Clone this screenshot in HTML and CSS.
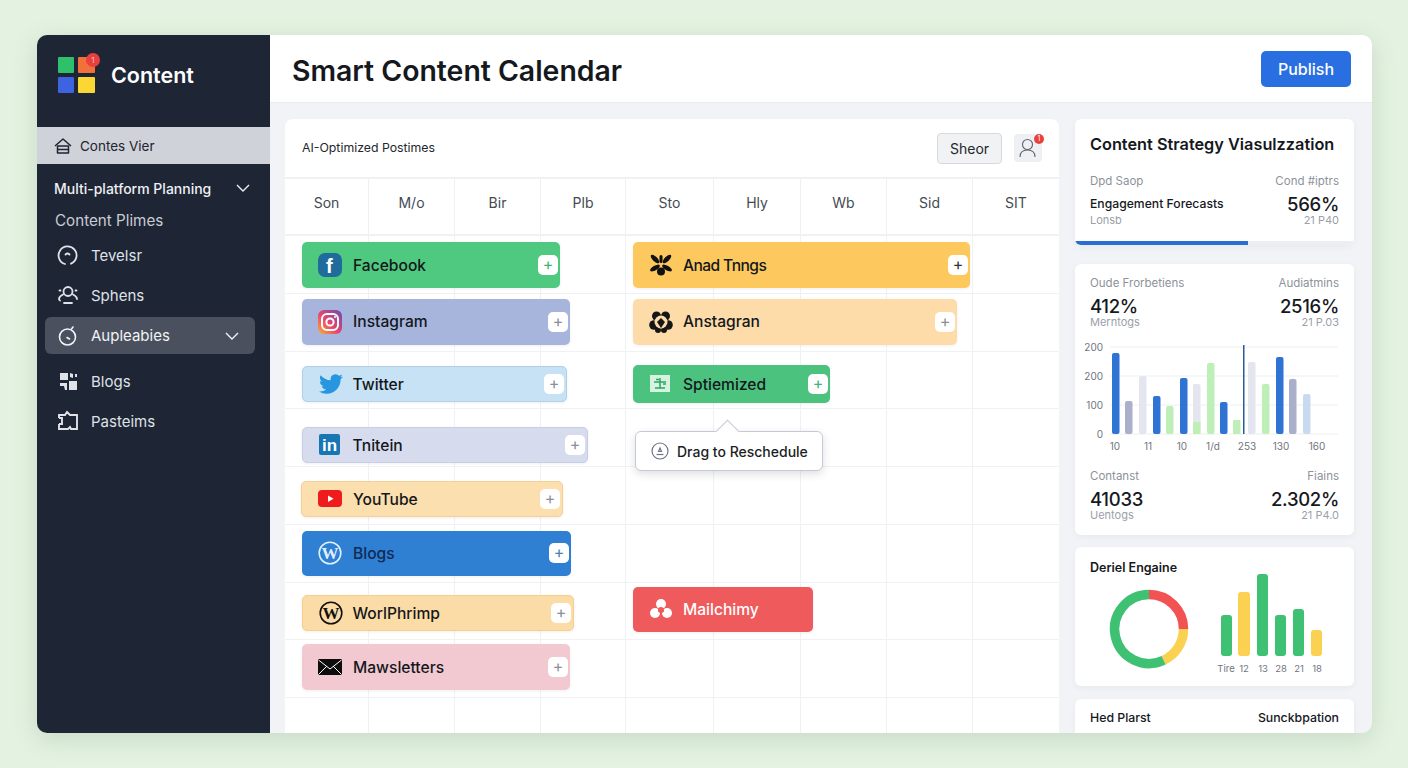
FILE: index.html

```html
<!DOCTYPE html>
<html>
<head>
  <meta charset="utf-8">
  <title>Smart Content Calendar</title>
  <link rel="stylesheet" href="styles.css">
</head>
<body>
  <div class="app">
    <aside class="sidebar">
      <div class="brand">
        <div class="logo">
          <span class="sq green"></span>
          <span class="sq orange"></span>
          <span class="sq blue"></span>
          <span class="sq yellow"></span>
          <span class="logo-badge">1</span>
        </div>
        <span class="brand-name">Content</span>
      </div>

      <div class="current">
        <svg class="current-icon" viewBox="0 0 18 18" fill="none" stroke="currentColor" stroke-width="1.5" stroke-linejoin="round"><path d="M1 9 9 2l8 7"/><path d="M3.500 9h11v7h-11z"/><path d="M3.500 12.500h11"/></svg>
        <span>Contes Vier</span>
      </div>

      <div class="group-head">
        <span>Multi-platform Planning</span>
        <svg class="chev" viewBox="0 0 14 8" fill="none" stroke="currentColor" stroke-width="1.4"><path d="M1 1l6 6 6-6"/></svg>
      </div>
      <div class="sub-head">Content Plimes</div>

      <div class="nav-item first">
        <svg class="nav-icon" viewBox="0 0 22 22" fill="none" stroke="currentColor" stroke-width="1.8" stroke-linecap="round"><path d="M8 20A9 9 0 1 1 14 19.700"/><path d="M8.500 10.500q2-2 4 0"/></svg>
        <span>Tevelsr</span>
      </div>
      <div class="nav-item">
        <svg class="nav-icon" viewBox="0 0 22 22" fill="none" stroke="currentColor" stroke-width="1.8" stroke-linecap="round"><circle cx="11" cy="7.500" r="4.500"/><path d="M6 10.500q-4 2-4 4.500 0 1 1 1.500"/><path d="M16 10.500q4 2 4 4.500"/><path d="M7 19h8"/><path d="M2.500 6.500h1M18.500 6.500h1"/></svg>
        <span>Sphens</span>
      </div>
      <div class="nav-item active">
        <svg class="nav-icon" viewBox="0 0 22 22" fill="none" stroke="currentColor" stroke-width="1.6" stroke-linecap="round"><circle cx="10.500" cy="12" r="8"/><path d="M10 12.500l2.500 1.500"/><path d="M14.500 4l1.500-2"/></svg>
        <span class="grow">Aupleabies</span>
        <svg class="chev" viewBox="0 0 14 8" fill="none" stroke="currentColor" stroke-width="1.4"><path d="M1 1l6 6 6-6"/></svg>
      </div>
      <div class="nav-item gap">
        <svg class="nav-icon" viewBox="0 0 22 22" fill="currentColor"><path d="M3 3h8v7H3z"/><path d="M13 3l3 1v4l-3-1z"/><path d="M18 4h2v3h-2z"/><path d="M12 11h8v9h-8z"/><path d="M3 13h7v7l-2 0-1-4H3z"/></svg>
        <span>Blogs</span>
      </div>
      <div class="nav-item">
        <svg class="nav-icon" viewBox="0 0 22 22" fill="none" stroke="currentColor" stroke-width="1.9"><path d="M2 8V5h6l2-3 3 3h7v14h-6l-1-2-2 2H2v-5"/><path d="M2 8h3v6H2"/></svg>
        <span>Pasteims</span>
      </div>
    </aside>

    <div class="content">
      <header class="topbar">
        <h1>Smart Content Calendar</h1>
        <button class="publish">Publish</button>
      </header>

      <div class="main">
        <section class="calendar">
          <div class="cal-head">
            <span class="cal-title">AI-Optimized Postimes</span>
            <div class="cal-tools">
              <button class="share">Sheor</button>
              <div class="avatar">
                <svg viewBox="0 0 28 28" fill="none" stroke="#5b6470" stroke-width="1.1"><circle cx="13.500" cy="10.500" r="5"/><path d="M6 23q0-7 7.500-7t7.500 7"/></svg>
                <span class="avatar-badge">1</span>
              </div>
            </div>
          </div>

          <div class="days">
            <div>Son</div><div>M/o</div><div>Bir</div><div>Plb</div><div>Sto</div><div>Hly</div><div>Wb</div><div>Sid</div><div>SIT</div>
          </div>

          <div class="cal-body">
            <div class="vline c1"></div><div class="vline c2"></div><div class="vline c3"></div>
            <div class="vline c4"></div><div class="vline c5"></div><div class="vline c6"></div>
            <div class="vline c7"></div><div class="vline c8"></div>
            <div class="hline r1"></div><div class="hline r2"></div><div class="hline r3"></div>
            <div class="hline r4"></div><div class="hline r5"></div><div class="hline r6"></div>
            <div class="hline r7"></div><div class="hline r8"></div>

            <div class="ev ev-facebook">
              <svg class="ev-icon" viewBox="0 0 24 24"><rect width="24" height="24" rx="7" fill="#1f6b9c"/><text x="8" y="20" class="fb-f">f</text></svg>
              <span class="ev-name">Facebook</span><span class="plus plus-green">+</span>
            </div>
            <div class="ev ev-instagram">
              <svg class="ev-icon" viewBox="0 0 24 24" fill="none">
                <defs><linearGradient id="ig" x1="0" y1="1" x2="1" y2="0"><stop offset="0" stop-color="#f9b233"/><stop offset=".45" stop-color="#e8456e"/><stop offset="1" stop-color="#6a4bb0"/></linearGradient></defs>
                <rect width="24" height="24" rx="6" fill="url(#ig)"/><rect x="4" y="4" width="16" height="16" rx="5" stroke="#fff" stroke-width="2"/><circle cx="12" cy="12" r="3.600" stroke="#fff" stroke-width="2"/><circle cx="17" cy="7" r="1" fill="#fff"/>
              </svg>
              <span class="ev-name">Instagram</span><span class="plus">+</span>
            </div>
            <div class="ev ev-twitter">
              <svg class="ev-icon" viewBox="0 0 24 24"><path fill="#2596df" d="M23.953 4.570a10 10 0 01-2.825.775 4.958 4.958 0 002.163-2.723c-.951.555-2.005.959-3.127 1.184a4.920 4.920 0 00-8.384 4.482C7.690 8.095 4.067 6.130 1.640 3.162a4.822 4.822 0 00-.666 2.475c0 1.710.870 3.213 2.188 4.096a4.904 4.904 0 01-2.228-.616v.060a4.923 4.923 0 003.946 4.827 4.996 4.996 0 01-2.212.085 4.936 4.936 0 004.604 3.417 9.867 9.867 0 01-6.102 2.105c-.390 0-.779-.023-1.170-.067a13.995 13.995 0 007.557 2.209c9.053 0 13.998-7.496 13.998-13.985 0-.210 0-.420-.015-.630A9.935 9.935 0 0024 4.590z"/></svg>
              <span class="ev-name">Twitter</span><span class="plus">+</span>
            </div>
            <div class="ev ev-linkedin">
              <svg class="ev-icon" viewBox="0 0 24 24"><rect y="1" width="21" height="21" rx="2" fill="#1876b4"/><text x="3" y="18" class="li-in">in</text></svg>
              <span class="ev-name">Tnitein</span><span class="plus">+</span>
            </div>
            <div class="ev ev-youtube">
              <svg class="ev-icon" viewBox="0 0 24 24"><rect y="3" width="24" height="17" rx="4" fill="#ee1c1c"/><path d="M10 8.500v6.500l5.500-3.200z" fill="#fff"/></svg>
              <span class="ev-name">YouTube</span><span class="plus">+</span>
            </div>
            <div class="ev ev-blogs">
              <svg class="ev-icon" viewBox="0 0 24 24"><circle cx="12" cy="12" r="10.800" fill="none" stroke="#dff0fb" stroke-width="1.600"/><text x="12" y="18" class="wp-w wp-light">W</text></svg>
              <span class="ev-name">Blogs</span><span class="plus plus-blue">+</span>
            </div>
            <div class="ev ev-wordpress">
              <svg class="ev-icon" viewBox="0 0 24 24"><circle cx="12" cy="12" r="10.800" fill="none" stroke="#111" stroke-width="1.600"/><text x="12" y="18" class="wp-w">W</text></svg>
              <span class="ev-name">WorlPhrimp</span><span class="plus">+</span>
            </div>
            <div class="ev ev-news">
              <svg class="ev-icon" viewBox="0 0 24 24"><rect y="4" width="24" height="16" rx="1" fill="#0d0d0d"/><path d="M.5 5 12 14 23.500 5M.5 19.500 9 11M23.500 19.500 15 11" fill="none" stroke="#fff" stroke-width="1"/></svg>
              <span class="ev-name">Mawsletters</span><span class="plus">+</span>
            </div>

            <div class="ev ev-anad">
              <svg class="ev-icon" viewBox="0 0 24 24" fill="#111"><ellipse cx="6" cy="6" rx="5.500" ry="2.300" transform="rotate(45 6 6)"/><ellipse cx="18" cy="6" rx="5.500" ry="2.300" transform="rotate(-45 18 6)"/><ellipse cx="6" cy="15" rx="5.500" ry="2.300" transform="rotate(-30 6 15)"/><ellipse cx="18" cy="15" rx="5.500" ry="2.300" transform="rotate(30 18 15)"/><rect x="10.500" y="2" width="3" height="8" rx="1.500"/><circle cx="12" cy="18.500" r="4"/></svg>
              <span class="ev-name">Anad Tnngs</span><span class="plus plus-dark">+</span>
            </div>
            <div class="ev ev-anstagran">
              <svg class="ev-icon" viewBox="0 0 24 24" fill="#161616"><circle cx="7.500" cy="6" r="4.500"/><circle cx="16.500" cy="6" r="4.500"/><circle cx="5" cy="15" r="4.800"/><circle cx="19" cy="15" r="4.800"/><circle cx="9" cy="20" r="3"/><circle cx="15" cy="20" r="3"/><circle cx="12" cy="12" r="6.500" fill="#fddcaa"/><path d="M12 8l4 4-4 6-4-6z"/></svg>
              <span class="ev-name">Anstagran</span><span class="plus">+</span>
            </div>
            <div class="ev ev-optimized">
              <svg class="ev-icon" viewBox="0 0 24 24"><rect x="1" y="3" width="20" height="17" fill="#d6f3e0"/><path d="M11 6v10M5 10h12M6 16h10M7 7.500h3M14 12h3" fill="none" stroke="#2fa565" stroke-width="1.500"/></svg>
              <span class="ev-name">Sptiemized</span><span class="plus plus-green">+</span>
            </div>
            <div class="ev ev-mailchimp">
              <svg class="ev-icon" viewBox="0 0 24 24" fill="#fff"><circle cx="12" cy="6" r="5"/><circle cx="6" cy="15" r="5"/><circle cx="18" cy="15" r="5"/><circle cx="12" cy="12" r="3" fill="#ef5b5c"/><path d="M12 9l3 5h-6z" fill="#ef5b5c"/></svg>
              <span class="ev-name">Mailchimy</span>
            </div>

            <div class="tooltip">
              <svg class="tip-icon" viewBox="0 0 18 18" fill="none" stroke="#6f7480" stroke-width="1.200"><circle cx="9" cy="9" r="8"/><path d="M7.500 9.500 9 6l1.500 3.500z"/><path d="M5.500 12.500h7"/></svg>
              <span>Drag to Reschedule</span>
            </div>
          </div>
        </section>

        <aside class="panel">
          <div class="card strategy">
            <h2>Content Strategy Viasulzzation</h2>
            <div class="stat-row">
              <div class="stat">
                <div class="s-label">Dpd Saop</div>
                <div class="s-name">Engagement Forecasts</div>
                <div class="s-sub">Lonsb</div>
              </div>
              <div class="stat right">
                <div class="s-label">Cond #iptrs</div>
                <div class="s-value">566%</div>
                <div class="s-sub">21 P40</div>
              </div>
            </div>
            <div class="progress"><div class="progress-fill"></div></div>
          </div>

          <div class="card forecast">
            <div class="stat-row">
              <div class="stat">
                <div class="s-label">Oude Frorbetiens</div>
                <div class="s-value">412%</div>
                <div class="s-sub">Merntogs</div>
              </div>
              <div class="stat right">
                <div class="s-label">Audiatmins</div>
                <div class="s-value">2516%</div>
                <div class="s-sub">21 P.03</div>
              </div>
            </div>

            <svg class="bars" viewBox="0 0 279 115">
              <g class="grid-lines">
                <path d="M35 7H263M35 36H263M35 65H263M35 94H263"/>
              </g>
              <g class="axis">
                <text x="28" y="10.500" text-anchor="end">200</text>
                <text x="28" y="39.500" text-anchor="end">200</text>
                <text x="28" y="68.500" text-anchor="end">100</text>
                <text x="28" y="97.500" text-anchor="end">0</text>
                <text x="40" y="110" text-anchor="middle">10</text>
                <text x="73" y="110" text-anchor="middle">11</text>
                <text x="107" y="110" text-anchor="middle">10</text>
                <text x="138" y="110" text-anchor="middle">1/d</text>
                <text x="172" y="110" text-anchor="middle">253</text>
                <text x="206" y="110" text-anchor="middle">130</text>
                <text x="242" y="110" text-anchor="middle">160</text>
              </g>
              <rect class="b-blue" x="37" y="13" width="7.500" height="81" rx="2"/>
              <rect class="b-slate" x="50" y="61" width="7.500" height="33" rx="2"/>
              <rect class="b-grey" x="64" y="36" width="7.500" height="58" rx="2"/>
              <rect class="b-blue" x="78" y="56" width="7.500" height="38" rx="2"/>
              <rect class="b-lime" x="91" y="66" width="7.500" height="28" rx="2"/>
              <rect class="b-blue" x="105" y="38" width="7.500" height="56" rx="2"/>
              <rect class="b-grey" x="118" y="44" width="7.500" height="50" rx="2"/>
              <rect class="b-lime" x="118" y="82" width="7.500" height="12"/>
              <rect class="b-lime" x="132" y="23" width="7.500" height="71" rx="2"/>
              <rect class="b-blue" x="145" y="62" width="7.500" height="32" rx="2"/>
              <rect class="b-lime" x="158" y="80" width="7.500" height="14" rx="1"/>
              <rect class="b-navy" x="168" y="5" width="1.500" height="89"/>
              <rect class="b-grey" x="173" y="22" width="7.500" height="72" rx="2"/>
              <rect class="b-lime" x="187" y="44" width="7.500" height="50" rx="2"/>
              <rect class="b-blue" x="201" y="17" width="7.500" height="77" rx="2"/>
              <rect class="b-slate" x="214" y="39" width="7.500" height="55" rx="2"/>
              <rect class="b-sky" x="228" y="54" width="7.500" height="40" rx="2"/>
            </svg>

            <div class="stat-row">
              <div class="stat">
                <div class="s-label">Contanst</div>
                <div class="s-value">41033</div>
                <div class="s-sub">Uentogs</div>
              </div>
              <div class="stat right">
                <div class="s-label">Fiains</div>
                <div class="s-value">2.302%</div>
                <div class="s-sub">21 P4.0</div>
              </div>
            </div>
          </div>

          <div class="card daily">
            <h3>Deriel Engaine</h3>
            <svg class="daily-chart" viewBox="0 0 279 116">
              <g fill="none" stroke-width="9.500">
                <path stroke="#f25252" d="M74 24.500A34.500 34.500 0 0 1 108.500 59"/>
                <path stroke="#fbd152" d="M108.500 59A34.500 34.500 0 0 1 88.600 90.300"/>
                <path stroke="#3ec173" d="M88.600 90.300A34.500 34.500 0 1 1 74 24.500"/>
              </g>
              <rect class="d-green" x="146" y="45" width="11" height="41" rx="3"/>
              <rect class="d-yellow" x="163" y="22" width="12" height="64" rx="3"/>
              <rect class="d-green" x="182" y="4" width="11" height="82" rx="3"/>
              <rect class="d-green" x="200" y="45" width="11" height="41" rx="3"/>
              <rect class="d-green" x="218" y="39" width="11" height="47" rx="3"/>
              <rect class="d-yellow" x="236" y="60" width="11" height="26" rx="3"/>
              <g class="axis small">
                <text x="151" y="102" text-anchor="middle">Tire</text>
                <text x="169" y="102" text-anchor="middle">12</text>
                <text x="188" y="102" text-anchor="middle">13</text>
                <text x="206" y="102" text-anchor="middle">28</text>
                <text x="224" y="102" text-anchor="middle">21</text>
                <text x="242" y="102" text-anchor="middle">18</text>
              </g>
            </svg>
          </div>

          <div class="card plans">
            <span>Hed Plarst</span>
            <span>Sunckbpation</span>
          </div>
        </aside>
      </div>
    </div>
  </div>
</body>
</html>
```

FILE: styles.css

```css
* {
  box-sizing: border-box;
}

body {
  margin: 0;
  height: 768px;
  overflow: hidden;
  padding: 35px 36px 35px 37px;
  background-color: #e4f3e1;
  font-family: Inter, "Liberation Sans", sans-serif;
  color: #15181d;
}

.app {
  display: flex;
  height: 698px;
  border-radius: 10px;
  overflow: hidden;
  background-color: #f1f3f6;
  box-shadow: 0 6px 24px rgba(70, 100, 80, 0.18);
}

/* sidebar */
.sidebar {
  width: 233px;
  flex-shrink: 0;
  background-color: #1e2535;
  color: #e6e8ec;
}

.brand {
  display: flex;
  align-items: center;
  height: 92px;
  padding: 0 0 12px 21px;
}

.logo {
  position: relative;
  display: grid;
  grid-template-columns: 16px 17px;
  grid-template-rows: 16px 16px;
  gap: 4px;
  margin-right: 16px;
}

.sq {
  border-radius: 1px;
}

.green { background-color: #2fc06c; }
.orange { background-color: #f2703a; }
.blue { background-color: #3d63e0; }
.yellow { background-color: #fad733; }

.logo-badge {
  position: absolute;
  top: -4px;
  right: -5px;
  width: 14px;
  height: 14px;
  border-radius: 50%;
  background-color: #ea3f3f;
  color: #f6c9c9;
  font-size: 8px;
  line-height: 14px;
  text-align: center;
}

.brand-name {
  font-size: 21.500px;
  font-weight: 600;
  color: #fff;
}

.current {
  display: flex;
  align-items: center;
  gap: 8px;
  height: 37px;
  padding-left: 17px;
  background-color: #cfd2d8;
  color: #1e2430;
  font-size: 13.500px;
}

.current-icon {
  width: 18px;
  height: 18px;
}

.group-head {
  display: flex;
  align-items: center;
  justify-content: space-between;
  height: 36px;
  margin-top: 6px;
  padding: 0 20px 0 17px;
  font-size: 14px;
  font-weight: 500;
  color: #eef0f3;
}

.chev {
  width: 14px;
  height: 8px;
  flex-shrink: 0;
}

.sub-head {
  height: 30px;
  line-height: 30px;
  padding-left: 18px;
  font-size: 15.200px;
  color: #c9ccd3;
}

.nav-item {
  display: flex;
  align-items: center;
  gap: 12px;
  height: 36px;
  margin-top: 4px;
  padding-left: 20px;
  font-size: 15px;
  color: #dfe2e7;
}

.nav-item.first {
  margin-top: 1px;
}

.nav-item.gap {
  margin-top: 9px;
}

.nav-item.active {
  width: 210px;
  height: 37px;
  margin-left: 8px;
  padding: 0 16px 0 12px;
  border-radius: 6px;
  background-color: #4a505e;
  color: #f2f3f5;
}

.nav-icon {
  width: 22px;
  height: 22px;
  flex-shrink: 0;
}

.grow {
  flex: 1;
}

/* top bar */
.content {
  flex: 1;
  min-width: 0;
}

.topbar {
  display: flex;
  align-items: center;
  justify-content: space-between;
  height: 68px;
  padding: 0 21px 0 22px;
  background-color: #fff;
  border-bottom: 1px solid #e9ebee;
}

h1 {
  margin: 4px 0 0;
  font-size: 28.400px;
  font-weight: 600;
  color: #15181d;
}

.publish {
  width: 90px;
  height: 36px;
  border: none;
  border-radius: 5px;
  background-color: #2a6fe2;
  color: #fff;
  font-family: inherit;
  font-size: 16px;
  font-weight: 500;
}

.main {
  display: flex;
  gap: 16px;
  height: 630px;
  padding: 16px 0 0 15px;
  overflow: hidden;
}

/* calendar */
.calendar {
  width: 774px;
  flex-shrink: 0;
  background-color: #fff;
  border-radius: 8px 8px 0 0;
}

.cal-head {
  display: flex;
  align-items: center;
  justify-content: space-between;
  height: 60px;
  padding: 0 17px;
  border-bottom: 2px solid #eff1f4;
}

.cal-title {
  margin-top: -2px;
  font-size: 12.300px;
  color: #23272e;
}

.cal-tools {
  display: flex;
  align-items: center;
  gap: 12px;
}

.share {
  width: 65px;
  height: 31px;
  border: 1px solid #d6d9de;
  border-radius: 4px;
  background-color: #f1f2f4;
  color: #23272e;
  font-family: inherit;
  font-size: 14px;
}

.avatar {
  position: relative;
  width: 28px;
  height: 28px;
  border-radius: 4px;
  background-color: #eef0f3;
}

.avatar svg {
  display: block;
}

.avatar-badge {
  position: absolute;
  top: 0;
  right: -2px;
  width: 10px;
  height: 10px;
  border-radius: 50%;
  background-color: #e8413c;
  color: #fff;
  font-size: 7px;
  line-height: 10px;
  text-align: center;
}

.days {
  display: grid;
  grid-template-columns: 84px 86px 86px 85px 88px 87px 86px 86px 86px;
  height: 57px;
  border-bottom: 2px solid #eff1f4;
}

.days div {
  border-right: 1px solid #eff1f4;
  line-height: 48px;
  text-align: center;
  font-size: 14px;
  color: #444a52;
}

.days div:last-child {
  border-right: none;
}

.cal-body {
  position: relative;
  display: grid;
  grid-template-columns: 84px 86px 86px 85px 88px 87px 86px 86px 86px;
  grid-template-rows: repeat(8, 57.750px) 36px;
}

.vline {
  grid-row: 1 / -1;
  border-right: 1px solid #eff1f4;
}

.c1 { grid-column: 1; }
.c2 { grid-column: 2; }
.c3 { grid-column: 3; }
.c4 { grid-column: 4; }
.c5 { grid-column: 5; }
.c6 { grid-column: 6; }
.c7 { grid-column: 7; }
.c8 { grid-column: 8; }

.hline {
  grid-column: 1 / -1;
  border-bottom: 1px solid #eff1f4;
}

.r1 { grid-row: 1; }
.r2 { grid-row: 2; }
.r3 { grid-row: 3; }
.r4 { grid-row: 4; }
.r5 { grid-row: 5; }
.r6 { grid-row: 6; }
.r7 { grid-row: 7; }
.r8 { grid-row: 8; }

.ev {
  display: flex;
  align-items: center;
  align-self: start;
  justify-self: start;
  grid-column: 1 / -1;
  margin-left: 17px;
  padding: 0 2px 0 16px;
  border-radius: 5px;
  box-shadow: 0 1px 3px rgba(60, 70, 90, 0.08);
  font-size: 15.600px;
  font-weight: 500;
  color: #14171c;
}

.ev-icon {
  width: 24px;
  height: 24px;
  margin-right: 11px;
  flex-shrink: 0;
}

.ev-name {
  flex: 1;
}

.plus {
  width: 20px;
  height: 20px;
  border-radius: 5px;
  background-color: #fff;
  color: #8a8f99;
  font-size: 16px;
  font-weight: 400;
  line-height: 19px;
  text-align: center;
}

.plus-green { color: #3fb573; }
.plus-blue { color: #4b7fb8; }
.plus-dark { color: #333; }

.ev-facebook {
  grid-row: 1;
  width: 258px;
  height: 46px;
  margin-top: 6px;
  background-color: #4fc97f;
}

.ev-instagram {
  grid-row: 2;
  width: 268px;
  height: 46px;
  margin-top: 5px;
  background-color: #a7b5dd;
}

.ev-twitter {
  grid-row: 3;
  width: 265px;
  height: 36px;
  margin-top: 14.500px;
  background-color: #c6e2f4;
  border: 1px solid #aed0e8;
}

.ev-linkedin {
  grid-row: 4;
  width: 286px;
  height: 36px;
  margin-top: 18px;
  background-color: #d6dbee;
  border: 1px solid #c8cee6;
}

.ev-youtube {
  grid-row: 5;
  width: 262px;
  height: 36px;
  margin-top: 14px;
  margin-left: 16px;
  background-color: #fbdfae;
  border: 1px solid #f5d095;
}

.ev-blogs {
  grid-row: 6;
  width: 269px;
  height: 45px;
  margin-top: 6px;
  background-color: #2f7fd3;
}

.ev-blogs .ev-name {
  color: #0f2a55;
}

.ev-wordpress {
  grid-row: 7;
  width: 272px;
  height: 36px;
  margin-top: 12.500px;
  background-color: #fbdca6;
  border: 1px solid #f7cf8b;
}

.ev-twitter .ev-icon,
.ev-linkedin .ev-icon,
.ev-wordpress .ev-icon {
  margin-right: 9.500px;
}

.ev-news {
  grid-row: 8;
  width: 268px;
  height: 46px;
  margin-top: 4px;
  background-color: #f2c9d0;
}

.ev-anad,
.ev-anstagran,
.ev-optimized,
.ev-mailchimp {
  grid-column: 5 / -1;
  margin-left: 7px;
}

.ev-anad .ev-icon,
.ev-anstagran .ev-icon,
.ev-optimized .ev-icon,
.ev-mailchimp .ev-icon {
  margin-right: 10px;
}

.ev-anad {
  grid-row: 1;
  width: 337px;
  height: 46px;
  margin-top: 6px;
  background-color: #fdc95f;
}

.ev-anad .ev-name {
  letter-spacing: -0.6px;
}

.ev-anstagran {
  grid-row: 2;
  width: 324px;
  height: 46px;
  margin-top: 5px;
  background-color: #fddcaa;
}

.ev-optimized {
  grid-row: 3;
  width: 197px;
  height: 38px;
  margin-top: 13.500px;
  background-color: #4cc27f;
}

.ev-mailchimp {
  grid-row: 7;
  width: 180px;
  height: 45px;
  margin-top: 4.500px;
  background-color: #ef5b5c;
  color: #fff;
}

.fb-f {
  font-family: "Liberation Sans", sans-serif;
  font-size: 20px;
  font-weight: 700;
  fill: #fff;
}

.li-in {
  font-family: "Liberation Sans", sans-serif;
  font-size: 17px;
  font-weight: 700;
  fill: #fff;
}

.wp-w {
  font-family: "Liberation Serif", serif;
  font-size: 17px;
  font-weight: 700;
  text-anchor: middle;
  fill: #111;
}

.wp-light {
  fill: #dff0fb;
}

.tooltip {
  position: absolute;
  left: 350px;
  top: 195px;
  display: flex;
  align-items: center;
  gap: 8px;
  width: 188px;
  height: 40px;
  padding-left: 15px;
  border: 1px solid #c6c9d3;
  border-radius: 6px;
  background-color: #fff;
  box-shadow: 0 3px 8px rgba(50, 55, 70, 0.16);
  font-size: 14px;
  font-weight: 500;
  color: #1b1e24;
}

.tooltip::before {
  content: "";
  position: absolute;
  left: 83px;
  top: -9px;
  width: 16px;
  height: 16px;
  background-color: #fff;
  border-top: 1px solid #c6c9d3;
  border-left: 1px solid #c6c9d3;
  transform: rotate(45deg);
}

.tip-icon {
  width: 18px;
  height: 18px;
  flex-shrink: 0;
}

/* right panel */
.panel {
  display: flex;
  flex-direction: column;
  gap: 12px;
  width: 279px;
  flex-shrink: 0;
}

.card {
  flex-shrink: 0;
  background-color: #fff;
  border-radius: 6px;
  box-shadow: 0 2px 6px rgba(60, 70, 90, 0.05);
}

.strategy {
  height: 126px;
  margin-bottom: 7px;
  padding-top: 15px;
  overflow: hidden;
}

.strategy h2 {
  margin: 0 15px 20px;
  font-size: 16.300px;
  font-weight: 600;
  line-height: 20px;
  white-space: nowrap;
}

.stat-row {
  display: flex;
  justify-content: space-between;
  padding: 0 15px;
}

.s-label {
  font-size: 11.500px;
  line-height: 14px;
  color: #8d929b;
}

.s-value {
  margin-top: 5px;
  font-size: 18.500px;
  font-weight: 500;
  letter-spacing: -0.3px;
  line-height: 22px;
  color: #15181d;
}

.s-name {
  margin-top: 5px;
  font-size: 12.200px;
  font-weight: 500;
  line-height: 22px;
}

.s-sub {
  margin-top: -1px;
  font-size: 11px;
  line-height: 12px;
  color: #9a9fa8;
}

.right {
  text-align: right;
}

.progress {
  height: 4px;
  margin-top: 15px;
  background-color: #eceef1;
}

.progress-fill {
  width: 62%;
  height: 100%;
  background-color: #2a6fd0;
}

.forecast {
  height: 271px;
  padding-top: 12px;
}

.bars {
  display: block;
  width: 279px;
  height: 115px;
  margin: 12px 0 14px;
}

.grid-lines path {
  fill: none;
  stroke: #eceef2;
}

.axis text {
  font-family: Inter, "Liberation Sans", sans-serif;
  font-size: 10px;
  fill: #70757e;
}

.axis.small text {
  font-size: 9.500px;
}

.b-blue { fill: #2f73d4; }
.b-slate { fill: #aab0c9; }
.b-grey { fill: #e3e5ef; }
.b-lime { fill: #bdefb6; }
.b-navy { fill: #2a5a9c; }
.b-sky { fill: #c7daef; }
.d-green { fill: #3ec173; }
.d-yellow { fill: #fbd152; }

.daily {
  height: 139px;
  padding-top: 14px;
}

.daily h3 {
  margin: 0 15px;
  font-size: 12.500px;
  font-weight: 600;
  line-height: 14px;
}

.daily-chart {
  display: block;
  width: 279px;
  height: 116px;
  margin-top: -5px;
}

.plans {
  display: flex;
  justify-content: space-between;
  height: 60px;
  margin-top: 1px;
  padding: 12px 15px 0;
  font-size: 12.300px;
  font-weight: 500;
  line-height: 14px;
}
```
